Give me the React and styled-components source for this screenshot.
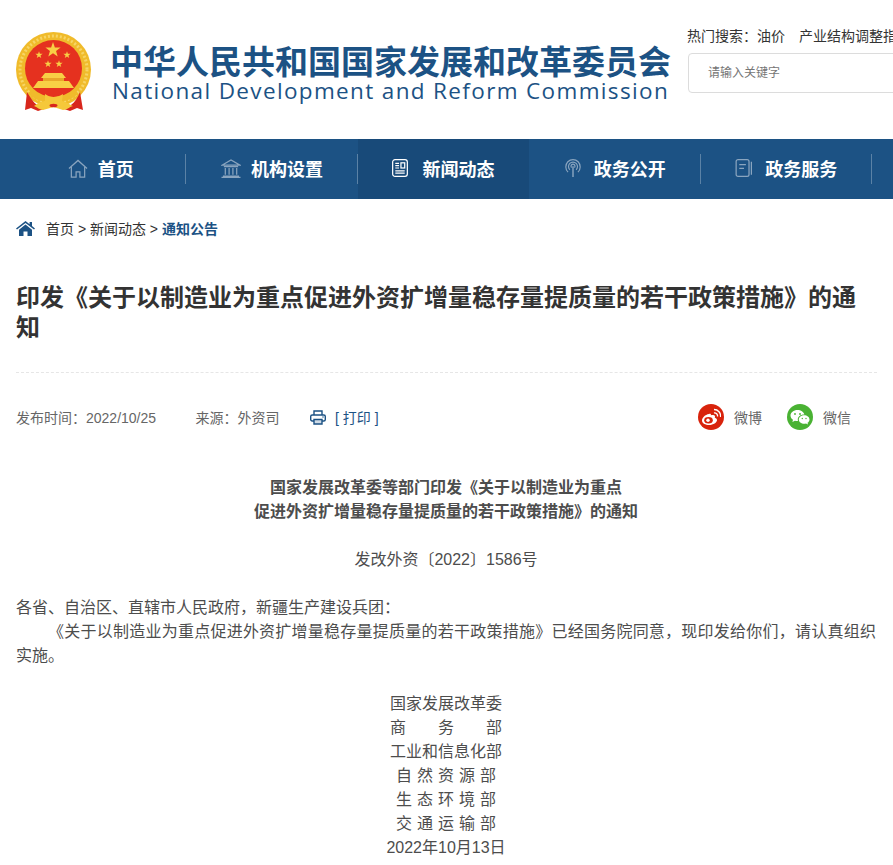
import React from "react";
import styled, { createGlobalStyle } from "styled-components";

const FONT = `"Liberation Sans", "Noto Sans CJK SC", sans-serif`;
const BLUE = "#1c5284";

const Global = createGlobalStyle`
  html, body { margin: 0; padding: 0; background: #fff; overflow-x: hidden; }
  body { font-family: ${FONT}; color: #4d4d4d; }
`;

const Page = styled.div`
  width: 893px;
  overflow: hidden;
`;
const Header = styled.header`
  height: 139px;
  display: flex;
  padding-left: 16px;
  box-sizing: border-box;
  overflow: hidden;
`;
const Brand = styled.div`
  display: flex;
  width: 671px;
  flex: none;
  padding-top: 32px;
  box-sizing: border-box;
  svg { flex: none; }
`;
const BrandText = styled.div`
  margin-left: 18px;
  padding-top: 13px;
  color: ${BLUE};
`;
const BrandCn = styled.div`
  font-size: 33px;
  line-height: 36px;
  font-weight: 700;
  white-space: nowrap;
`;
const BrandEn = styled.div`
  font-size: 22.5px;
  line-height: 20px;
  margin-left: 2px;
  letter-spacing: 1.35px;
  white-space: nowrap;
  font-family: "Open Sans", sans-serif;
`;
const SearchBox = styled.div`
  flex: none;
  width: 300px;
  padding-top: 26px;
`;
const Hot = styled.div`
  font-size: 14px;
  line-height: 20px;
  color: #333;
  white-space: nowrap;
  span { margin-right: 14px; }
`;
const Input = styled.div`
  margin: 7px 0 0 1px;
  height: 40px;
  box-sizing: border-box;
  border: 1px solid #dcdcdc;
  border-radius: 4px;
  padding-left: 19px;
  font-size: 12px;
  line-height: 38px;
  color: #757575;
`;
const Nav = styled.nav`
  height: 60px;
  background: ${BLUE};
  display: flex;
  padding-left: 15px;
`;
const NavItem = styled.a`
  width: 171.4px;
  flex: none;
  box-sizing: border-box;
  display: flex;
  align-items: center;
  justify-content: center;
  gap: 10px;
  padding-bottom: 2px;
  color: #fff;
  font-size: 18px;
  font-weight: 700;
  position: relative;
  background: ${(p) => (p.$active ? "#184a79" : "transparent")};
  &::after {
    content: "";
    position: absolute;
    right: 0;
    top: 15px;
    height: 30px;
    width: 1px;
    background: ${(p) => (p.$active ? "transparent" : "rgba(255,255,255,.28)")};
  }
`;
const NavIcon = styled.span`
  width: 20px;
  flex: none;
  display: flex;
  align-items: center;
  justify-content: flex-start;
`;
const Crumbs = styled.div`
  height: 60px;
  display: flex;
  align-items: center;
  padding: 0 0 2px 16px;
  box-sizing: border-box;
  font-size: 14px;
  color: #333;
  svg { margin-right: 11px; }
`;
const CrumbTrail = styled.span`
  white-space: pre;
  b { color: ${BLUE}; font-weight: 700; }
`;
const Title = styled.h1`
  margin: 24px 16px 0;
  padding-bottom: 29px;
  border-bottom: 1px dashed #e6e6e6;
  font-size: 24px;
  line-height: 30px;
  font-weight: 700;
  color: #333;
`;
const Meta = styled.div`
  margin: 29px 16px 0;
  height: 30px;
  display: flex;
  align-items: center;
  font-size: 14px;
  color: #666;
`;
const MetaItem = styled.span`
  margin-right: ${(p) => p.$gap}px;
  white-space: pre;
`;
const Print = styled.span`
  display: flex;
  align-items: center;
  gap: 9px;
  color: ${BLUE};
  white-space: pre;
`;
const Share = styled.div`
  margin-left: auto;
  margin-right: 26px;
  display: flex;
  gap: 25px;
`;
const ShareItem = styled.span`
  display: flex;
  align-items: center;
  gap: 10px;
  color: #666;
`;
const Round = styled.span`
  width: 26px;
  height: 26px;
  border-radius: 50%;
  background: ${(p) => p.$c};
  display: flex;
  align-items: center;
  justify-content: center;
`;
const Article = styled.article`
  margin: 44px 16px 0 16px;
  width: 860px;
  font-size: 16px;
  line-height: 24px;
  color: #4d4d4d;
`;
const Center = styled.p`
  margin: 0 0 24px;
  text-align: center;
  font-weight: ${(p) => (p.$bold ? 700 : 400)};
`;
const Para = styled.p`
  margin: 0;
  text-align: justify;
  text-indent: ${(p) => (p.$indent ? "2em" : 0)};
`;
const Sign = styled.div`
  margin-top: 24px;
  text-align: center;
  white-space: pre;
  word-spacing: 0.5px;
  div { display: block; }
`;

const Star = ({ x, y, r }) => {
  const pts = [];
  for (let i = 0; i < 10; i++) {
    const a = -Math.PI / 2 + (i * Math.PI) / 5;
    const d = i % 2 ? r * 0.4 : r;
    pts.push(`${(x + d * Math.cos(a)).toFixed(2)},${(y + d * Math.sin(a)).toFixed(2)}`);
  }
  return <polygon points={pts.join(" ")} fill="#f8cf45" />;
};

const Emblem = () => (
  <svg width="76" height="81" viewBox="0 0 76 81">
    <circle cx="37.5" cy="37.5" r="37.500" fill="#f0bb2b" />
    <circle cx="37.5" cy="37.5" r="33.500" fill="none" stroke="#f7d566" strokeWidth="3" strokeDasharray="2 2" />
    <circle cx="37.5" cy="36.500" r="28.500" fill="#e5311f" />
    <Star x={37} y={18} r={8} />
    <Star x={23} y={23} r={3.8} />
    <Star x={51} y={23} r={3.8} />
    <Star x={32} y={32} r={3.800} />
    <Star x={43} y={32} r={3.800} />
    <path d="M29 41h17l4 5H25z" fill="#f8cf45" />
    <path d="M27 46h21v3H27z" fill="#e8a72a" />
    <path d="M22 49h31l5 7H17z" fill="#f8cf45" />
    <path d="M17 58c4 5 12 7 20 7s17-2 21-7l4 3c-5 7-15 9-25 9s-20-2-25-9z" fill="#f0bb2b" />
    <path d="M11 60l-2 18 6-2 7 3 9-3-10-3c-4-3-7-8-10-13z" fill="#d8261c" />
    <path d="M64 60l3 18-6-2-7 3-9-3 10-3c4-3 7-8 9-13z" fill="#d8261c" />
    <path d="M29 62c3 2 5 3 8.500 3S44 64 47 62l-1 7c5 1 8 4 11 5-4 1-6 4-10 4l-9.500-3L27 78c-3 0-6-3-9-4 3-2 5-4 11-5z" fill="#f5c83a" />
    <ellipse cx="37.500" cy="73.500" rx="4" ry="1.800" fill="#d8261c" />
  </svg>
);

const IconHome = ({ c }) => (
  <svg width="20" height="19" viewBox="0 0 21 20" fill="none" stroke={c} strokeWidth="1.3">
    <path d="M1 10L10.500 1.500 20 10" />
    <path d="M3.500 8.500V19h5v-5.500h4V19h5V8.500" />
  </svg>
);
const IconBank = ({ c }) => (
  <svg width="20" height="19" viewBox="0 0 21 20" fill="none" stroke={c} strokeWidth="1.3">
    <path d="M1 6.500L10.500 1 20 6.500z" />
    <path d="M3 8h15M4.500 9.500v7M8.500 9.500v7M12.500 9.500v7M16.500 9.500v7M2 18h17M.500 19.300h20" />
  </svg>
);
const IconNews = ({ c }) => (
  <svg width="16" height="18" viewBox="0 0 17 19" fill="none" stroke={c} strokeWidth="1.3">
    <rect x=".7" y=".7" width="15.600" height="17.600" rx="2.500" />
    <path d="M3.500 4.500h4M3.500 7h4M3.500 9.500h4M3.500 12.500h10M3.500 15h10" />
    <rect x="9.500" y="4" width="4" height="5.500" />
  </svg>
);
const IconSignal = ({ c }) => (
  <svg width="18" height="18" viewBox="0 0 19 20" fill="none" stroke={c} strokeWidth="1.3">
    <path d="M4 14.500a8 8 0 1 1 11 0" />
    <path d="M6 12a5 5 0 1 1 7 0" />
    <path d="M8 9.500a2.200 2.200 0 1 1 3 0" />
    <path d="M9.500 8v12" strokeWidth="1.600" />
  </svg>
);
const IconBook = ({ c }) => (
  <svg width="18" height="18" viewBox="0 0 18 19" fill="none" stroke={c} strokeWidth="1.3">
    <rect x=".7" y=".7" width="13.600" height="17.600" rx="2" />
    <path d="M4 6h7M4 10h5M16.800 3v13.500" />
  </svg>
);
const IconCrumbHome = () => (
  <svg width="19" height="15" viewBox="0 0 19 15" fill={BLUE}>
    <path d="M9.500 0L0 7.400l1 1.200L9.500 2 18 8.600l1-1.200-3-2.300V1h-2.400v2.200z" />
    <path d="M9.500 3.500L3 8.700V15h4.500v-4.500h4V15H16V8.700z" />
  </svg>
);
const IconPrinter = () => (
  <svg width="16" height="15" viewBox="0 0 16 15" fill="none" stroke={BLUE} strokeWidth="1.400">
    <path d="M4 5V1h8v4" />
    <rect x=".7" y="5" width="14.600" height="6" rx="1.500" />
    <path d="M4 9.500h8V14H4z" fill="#cfdbe6" />
    <path d="M12.500 7h1" />
  </svg>
);
const IconWeibo = () => (
  <svg width="20" height="18" viewBox="0 0 20 18">
    <path d="M8 6C4 6.500 1 10 1 12.500 1 15.500 4.500 17 8 17c4.500 0 8-2.500 8-5 0-1.500-1.500-2-2.200-2.300.6-1.600 0-2.700-2-2.600-1 .1-1.700.4-1.900.4.300-1.200-.3-2-1.900-1.500z" fill="#fff" />
    <ellipse cx="7.500" cy="12.300" rx="4.300" ry="3.300" fill="#d8230c" />
    <circle cx="7" cy="12.300" r="1.700" fill="#fff" />
    <path d="M13 5a3 3 0 0 1 3.500 3.500M13 1.500A6.500 6.500 0 0 1 19.500 9" fill="none" stroke="#fff" strokeWidth="1.300" />
  </svg>
);
const IconWechat = () => (
  <svg width="20" height="17" viewBox="0 0 20 17" fill="#fff">
    <path d="M7.500 1C3.500 1 .5 3.500.5 6.500c0 1.800 1 3.200 2.500 4.300L2.400 13l2.500-1.300c.9.300 1.700.4 2.600.4h.5a5 5 0 0 1-.2-1.500C7.800 7.700 10.400 5.500 14 5.500h.4C13.700 3 10.900 1 7.500 1z" />
    <path d="M19.500 10.500c0-2.500-2.500-4.300-5.300-4.300-3 0-5.400 1.900-5.400 4.300s2.400 4.300 5.400 4.300c.6 0 1.200-.1 1.800-.3l2 1.100-.5-1.800c1.300-.8 2-2 2-3.300z" />
    <circle cx="5" cy="5" r=".9" fill="#49b233" />
    <circle cx="10" cy="5" r=".9" fill="#49b233" />
    <circle cx="12.300" cy="9.500" r=".7" fill="#49b233" />
    <circle cx="16" cy="9.500" r=".7" fill="#49b233" />
  </svg>
);

const DIM = "#8aa5bf";

export default function App() {
  return (
    <Page>
      <Global />
      <Header>
        <Brand>
          <Emblem />
          <BrandText>
            <BrandCn>中华人民共和国国家发展和改革委员会</BrandCn>
            <BrandEn>National Development and Reform Commission</BrandEn>
          </BrandText>
        </Brand>
        <SearchBox>
          <Hot>
            热门搜索：<span>油价</span>产业结构调整指导目录
          </Hot>
          <Input>请输入关键字</Input>
        </SearchBox>
      </Header>
      <Nav>
        <NavItem><NavIcon><IconHome c={DIM} /></NavIcon>首页</NavItem>
        <NavItem><NavIcon><IconBank c={DIM} /></NavIcon>机构设置</NavItem>
        <NavItem $active><NavIcon><IconNews c="#fff" /></NavIcon>新闻动态</NavItem>
        <NavItem><NavIcon><IconSignal c={DIM} /></NavIcon>政务公开</NavItem>
        <NavItem><NavIcon><IconBook c={DIM} /></NavIcon>政务服务</NavItem>
      </Nav>
      <Crumbs>
        <IconCrumbHome />
        <CrumbTrail>首页 &gt; 新闻动态 &gt; <b>通知公告</b></CrumbTrail>
      </Crumbs>
      <Title>印发《关于以制造业为重点促进外资扩增量稳存量提质量的若干政策措施》的通知</Title>
      <Meta>
        <MetaItem $gap={39.5}>发布时间：2022/10/25</MetaItem>
        <MetaItem $gap={30.5}>来源：外资司</MetaItem>
        <Print><IconPrinter />[ 打印 ]</Print>
        <Share>
          <ShareItem><Round $c="#d8230c"><IconWeibo /></Round>微博</ShareItem>
          <ShareItem><Round $c="#49b233"><IconWechat /></Round>微信</ShareItem>
        </Share>
      </Meta>
      <Article>
        <Center $bold>
          国家发展改革委等部门印发《关于以制造业为重点
          <br />
          促进外资扩增量稳存量提质量的若干政策措施》的通知
        </Center>
        <Center>发改外资〔2022〕1586号</Center>
        <Para>各省、自治区、直辖市人民政府，新疆生产建设兵团：</Para>
        <Para $indent>
          《关于以制造业为重点促进外资扩增量稳存量提质量的若干政策措施》已经国务院同意，现印发给你们，请认真组织实施。
        </Para>
        <Sign>
          <div>国家发展改革委</div>
          <div>商　　务　　部</div>
          <div>工业和信息化部</div>
          <div>自 然 资 源 部</div>
          <div>生 态 环 境 部</div>
          <div>交 通 运 输 部</div>
          <div>2022年10月13日</div>
        </Sign>
      </Article>
    </Page>
  );
}
